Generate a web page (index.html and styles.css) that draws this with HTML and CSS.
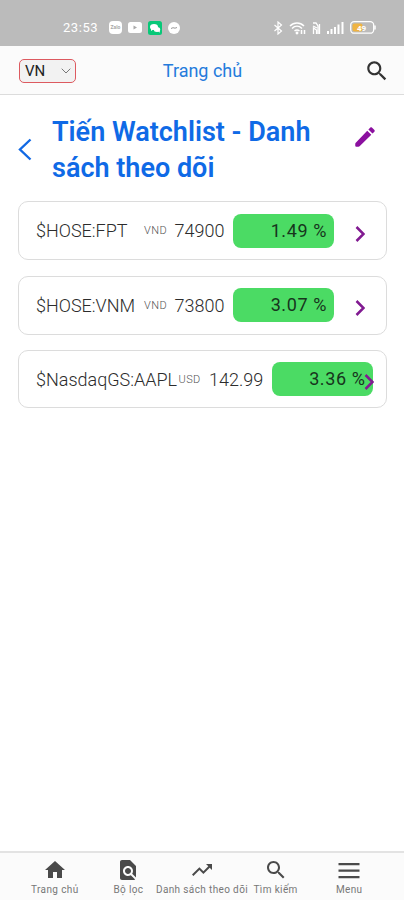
FILE: index.html
```html
<!DOCTYPE html>
<html lang="vi">
<head>
<meta charset="utf-8">
<title>Watchlist</title>
<link rel="stylesheet" href="styles.css">
</head>
<body>
<div class="status">
  <span class="clock">23:53</span>
  <div class="notifications">
    <span class="app zalo">Zalo</span>
    <svg class="video" viewBox="0 0 14 11"><rect width="14" height="11" rx="2.5" fill="#fff"/><path d="M5.5 3.5v4l3.5-2z" fill="#aaa"/></svg>
    <svg class="chat" viewBox="0 0 14 14"><rect width="14" height="14" rx="2.5" fill="#08c878"/><ellipse cx="6" cy="6" rx="4" ry="3" fill="#fff"/><ellipse cx="9" cy="8.5" rx="3.2" ry="2.5" fill="#fff"/><path d="M3 7v3l3-2zM10 10l1.7 1.7V9z" fill="#fff"/></svg>
    <svg class="messenger" viewBox="0 0 12 12"><circle cx="6" cy="6" r="6" fill="#fff"/><path d="M3 6.500l2-.8 2 .5 2-.7" stroke="#999" fill="none"/></svg>
  </div>
  <div class="system">
    <svg width="10" height="14" viewBox="0 0 10 14" fill="none" stroke="#fff" stroke-width="1.2"><path d="M1.5 4l7 6L5 13V1l3.500 3-7 6"/></svg>
    <svg class="wifi" width="17" height="14" viewBox="0 0 17 14" fill="none" stroke="#fff" stroke-width="1.5"><path d="M1 5c4-4 10-4 14 0M3 7.500c3-3 7-3 10 0M5.500 10c2-1.500 3-1.500 5 0"/><circle cx="8" cy="12" r=".7"/><path d="M12.500 13V9M15.500 9v4"/></svg>
    <svg class="network" width="9" height="14" viewBox="0 0 9 14" fill="none" stroke="#fff" stroke-width="1.3"><path d="M1 2h3l2 3v8M1 5l4 2M1.500 13V7l3 2v4M7.500 3v10"/></svg>
    <svg class="signal" width="17" height="13" viewBox="0 0 17 13" fill="#fff"><path d="M0 10h2v3H0zM3.500 8h2v5h-2zM7 6h2v7H7zM10.500 3.500h2V13h-2zM14.500 1h2v12h-2z"/></svg>
    <svg class="battery" width="26" height="13" viewBox="0 0 26 13"><rect x=".7" y=".7" width="23" height="11.500" rx="3.500" fill="none" stroke="#fff" stroke-width="1.300"/><rect x="2.500" y="2.500" width="10" height="8" rx="2" fill="#efb443"/><path d="M25 4.500v4" stroke="#fff" stroke-width="1.500"/><text x="7" y="9.500" font-size="8" font-weight="700" fill="#fff">49</text></svg>
  </div>
</div>
<header class="header">
  <div class="locale">VN<svg width="10" height="6" viewBox="0 0 10 6" fill="none" stroke="#777"><path d="M.7.700L5 5 9.300.700"/></svg></div>
  <span class="page">Trang chủ</span>
  <svg class="search" width="26" height="26" viewBox="0 0 24 24" fill="#333"><path d="M15.500 14h-.79l-.28-.27C15.410 12.590 16 11.110 16 9.500 16 5.910 13.090 3 9.500 3S3 5.910 3 9.500 5.910 16 9.500 16c1.610 0 3.090-.59 4.230-1.570l.27.28v.79l5 4.990L20.490 19l-4.990-5zm-6 0C7.010 14 5 11.990 5 9.500S7.010 5 9.500 5 14 7.010 14 9.500 11.990 14 9.500 14z"/></svg>
</header>
<main class="main">
  <div class="heading">
    <svg class="back" width="14" height="23" viewBox="0 0 14 23" fill="none" stroke="#1169e4" stroke-width="2.400"><path d="M12.500 1.500l-10.500 10 10.500 10"/></svg>
    <h1>Tiến Watchlist - Danh<br>sách theo dõi</h1>
    <svg class="edit" width="26" height="26" viewBox="0 0 24 24" fill="#8b109f"><path d="M3 18.500q0-.7.500-1.200L14.060 6.190l3.750 3.750L7 20.600q-.4.400-1 .4H4q-1 0-1-1zM20.710 7.040c.39-.39.39-1.020 0-1.410l-2.340-2.340c-.39-.39-1.020-.39-1.410 0l-1.830 1.830 3.750 3.750 1.830-1.830z"/></svg>
  </div>
  <div class="cards">
    <div class="card"><span class="symbol">$HOSE:FPT</span><span class="currency">VND</span><span class="price">74900</span><span class="change">1.49 %</span><svg class="go" viewBox="0 0 10 16"><path d="M1.500 1l7 7-7 7"/></svg></div>
    <div class="card"><span class="symbol">$HOSE:VNM</span><span class="currency">VND</span><span class="price">73800</span><span class="change">3.07 %</span><svg class="go" viewBox="0 0 10 16"><path d="M1.500 1l7 7-7 7"/></svg></div>
    <div class="card wide"><span class="symbol">$NasdaqGS:AAPL</span><span class="currency">USD</span><span class="price">142.99</span><span class="change">3.36 %</span><svg class="go" viewBox="0 0 10 16"><path d="M1.500 1l7 7-7 7"/></svg></div>
  </div>
</main>
<nav class="tabs">
  <div class="tab"><svg viewBox="0 0 24 24"><path d="M10 20v-6h4v6h5v-8h3L12 3 2 12h3v8z"/></svg><span>Trang chủ</span></div>
  <div class="tab"><svg viewBox="0 0 24 24"><path d="M20 19.590V8l-6-6H6c-1.100 0-1.990.9-1.990 2L4 20c0 1.100.89 2 1.990 2H18c.45 0 .85-.15 1.190-.4l-4.430-4.430c-.8.520-1.740.830-2.760.830-2.760 0-5-2.240-5-5s2.240-5 5-5 5 2.240 5 5c0 1.020-.31 1.960-.83 2.750L20 19.590zM9 13c0 1.660 1.340 3 3 3s3-1.340 3-3-1.340-3-3-3-3 1.340-3 3z"/></svg><span>Bộ lọc</span></div>
  <div class="tab"><svg viewBox="0 0 24 24"><path d="M16 6l2.290 2.290-4.880 4.880-4-4L2 16.590 3.410 18l6-6 4 4 6.300-6.290L22 12V6z"/></svg><span>Danh sách theo dõi</span></div>
  <div class="tab"><svg class="find" viewBox="0 0 24 24"><path d="M15.500 14h-.79l-.28-.27C15.410 12.590 16 11.110 16 9.500 16 5.910 13.090 3 9.500 3S3 5.910 3 9.500 5.910 16 9.500 16c1.610 0 3.090-.59 4.230-1.570l.27.28v.79l5 4.990L20.490 19l-4.990-5zm-6 0C7.010 14 5 11.990 5 9.500S7.010 5 9.500 5 14 7.010 14 9.500 11.990 14 9.500 14z"/></svg><span>Tìm kiếm</span></div>
  <div class="tab"><svg viewBox="0 0 24 24"><path d="M1.500 5h21v2.200h-21zM1.500 11.500h21v2.200h-21zM1.500 18h21v2.200h-21z"/></svg><span>Menu</span></div>
</nav>
</body>
</html>
```
FILE: styles.css
```css
* { box-sizing: border-box; }
body { margin: 0; height: 900px; display: flex; flex-direction: column; overflow: hidden; background: #fff; font-family: Roboto, sans-serif; }
svg { display: block; flex: none; }
.status { height: 46px; padding: 9px 28px 0 63px; display: flex; align-items: center; background: #bbb; }
.clock { width: 46px; color: #fff; font-size: 13px; letter-spacing: .55px; }
.notifications { display: flex; align-items: center; gap: 6px; }
.app { width: 13px; height: 13px; border-radius: 4px; background: #fff; color: #aaa; font-size: 5px; font-weight: 700; line-height: 13px; text-align: center; }
.video { width: 14px; height: 11px; }
.chat { width: 14px; height: 14px; }
.messenger { width: 12px; height: 12px; }
.system { margin-left: auto; display: flex; align-items: center; gap: 6px; }
.header { height: 49px; padding: 1px 14px 0 19px; display: grid; grid-template-columns: 57px 1fr 61px; align-items: center; background: #fbfbfb; border-bottom: 1px solid #dcdcdc; }
.locale { height: 24px; padding: 0 4px 0 5px; display: flex; align-items: center; justify-content: space-between; border: 1px solid #dd5a60; border-radius: 5px; background: #f2f2f2; font-size: 15px; color: #222; }
.page { text-align: center; font-size: 18px; color: #247bdc; }
.search { justify-self: end; }
.main { flex: 1; padding: 19px 17px 0 18px; }
.heading { height: 87px; display: flex; }
.back { margin-top: 24px; }
h1 { margin: 0 0 0 20px; flex: 1; font-size: 27px; line-height: 36px; font-weight: 600; color: #0f6ae6; white-space: nowrap; }
.edit { margin: 10px 9px 0 0; }
.cards { display: grid; grid-template-columns: minmax(0, 1fr); gap: 15.5px; }
.card { height: 59px; padding: 0 12px 0 17px; display: flex; align-items: center; border: 1px solid #dcdcdc; border-radius: 10px; white-space: nowrap; color: #2c2c2c; font-size: 18px; font-weight: 300; }
.card > * { flex: none; }
.symbol { width: 108px; }
.currency { width: 30.5px; font-size: 11px; color: #555; letter-spacing: .4px; }
.price { width: 58.5px; }
.change { width: 101px; height: 34px; padding-right: 7px; border-radius: 8px; background: #4bdb64; color: #17351d; font-weight: 400; line-height: 34px; text-align: right; letter-spacing: .6px; }
.go { width: 10px; height: 16px; margin: 6px 0 0 21px; fill: none; stroke: #811a91; stroke-width: 2.5; }
.wide { height: 58px; }
.wide .symbol { width: 142.5px; }
.wide .price { width: 62.5px; }
.wide .go { margin-left: -9px; }
.tabs { height: 49px; padding: 5px 18px 0; display: grid; grid-template-columns: repeat(5, 1fr); background: #fbfbfb; border-top: 2px solid #e3e3e3; }
.tab { display: flex; flex-direction: column; align-items: center; min-width: 0; color: #777; font-size: 10px; line-height: 15px; letter-spacing: .37px; white-space: nowrap; }
.tab svg { width: 24px; height: 24px; fill: #4a4a4a; }
```
